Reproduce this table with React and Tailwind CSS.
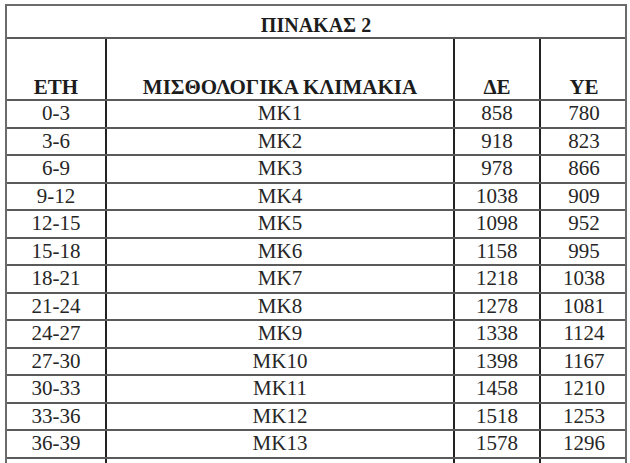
import React from 'react';

const rows = [
  ['0-3', 'MK1', '858', '780'],
  ['3-6', 'MK2', '918', '823'],
  ['6-9', 'MK3', '978', '866'],
  ['9-12', 'MK4', '1038', '909'],
  ['12-15', 'MK5', '1098', '952'],
  ['15-18', 'MK6', '1158', '995'],
  ['18-21', 'MK7', '1218', '1038'],
  ['21-24', 'MK8', '1278', '1081'],
  ['24-27', 'MK9', '1338', '1124'],
  ['27-30', 'MK10', '1398', '1167'],
  ['30-33', 'MK11', '1458', '1210'],
  ['33-36', 'MK12', '1518', '1253'],
  ['36-39', 'MK13', '1578', '1296'],
];

const cols = 'grid grid-cols-[100px_348px_86px_86px]';

export default function App() {
  return (
    <div className="h-[463px] w-[630px] overflow-hidden bg-white pt-[4px] pl-[5px] font-['Times_New_Roman','Liberation_Serif',serif] text-[#262626]">
      <div className="w-[622px] border-t-2 border-l-2 border-r-2 border-[#6b6b6b]">
        {/* title */}
        <div className="h-[33px] flex items-end justify-center pb-[2px] border-b-2 border-[#5a5a5a]">
          <span className="text-[20px] leading-none font-bold text-[#1c1c1c]">ΠΙΝΑΚΑΣ 2</span>
        </div>

        {/* column headings */}
        <div className={`${cols} h-[62px] border-b-2 border-[#5a5a5a] text-[21px] leading-none font-bold text-[#1c1c1c]`}>
          <div className="flex items-end justify-center pb-[1px] border-r-2 border-[#222]">ΕΤΗ</div>
          <div className="flex items-end justify-center pb-[1px] border-r-2 border-[#222]">ΜΙΣΘΟΛΟΓΙΚΑ ΚΛΙΜΑΚΙΑ</div>
          <div className="flex items-end justify-center pb-[1px] border-r-2 border-[#222]">ΔΕ</div>
          <div className="flex items-end justify-center pb-[1px]">ΥΕ</div>
        </div>

        {rows.map((r) => (
          <div key={r[0]} className={`${cols} h-[27.5px] border-b-2 border-[#5a5a5a] text-[21px] leading-none`}>
            <div className="flex items-center justify-center border-r-2 border-[#222]">{r[0]}</div>
            <div className="flex items-center justify-center border-r-2 border-[#222]">{r[1]}</div>
            <div className="flex items-center justify-center border-r-2 border-[#222]">{r[2]}</div>
            <div className="flex items-center justify-center">{r[3]}</div>
          </div>
        ))}

        {/* table continues below the crop */}
        <div className={`${cols} h-[27.5px]`}>
          <div className="border-r-2 border-[#222]" />
          <div className="border-r-2 border-[#222]" />
          <div className="border-r-2 border-[#222]" />
          <div />
        </div>
      </div>
    </div>
  );
}
